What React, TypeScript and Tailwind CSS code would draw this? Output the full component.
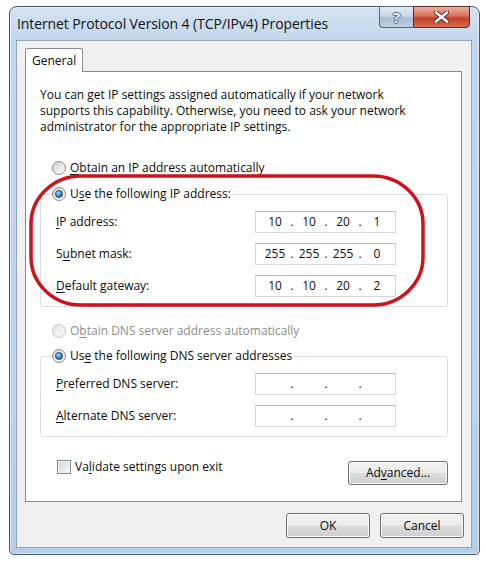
import type { ReactNode } from "react";

function Radio({ checked, disabled }: { checked?: boolean; disabled?: boolean }) {
  return (
    <span
      className={`flex h-[14px] w-[14px] shrink-0 items-center justify-center rounded-full border ${
        disabled
          ? "border-[#c2c4c6] bg-[linear-gradient(135deg,#e4e4e4,#fbfbfb)]"
          : "border-[#8a8c8e] bg-[linear-gradient(135deg,#d2d3d5,#fcfcfc)]"
      }`}
    >
      {checked && (
        <span className="h-[8px] w-[8px] rounded-full border border-[#1d4f80] bg-[radial-gradient(circle_at_35%_30%,#b7e3ff,#3a8ccc_50%,#0f4c86)]" />
      )}
    </span>
  );
}

function Key({ children }: { children: ReactNode }) {
  return <span className="underline decoration-1 underline-offset-[2px]">{children}</span>;
}

function IpBox({ parts }: { parts?: string[] }) {
  const p = parts ?? ["", "", "", ""];
  return (
    <div className="flex h-[22px] w-[141px] items-center border border-[#d3d6da] border-t-[#b9bcc1] bg-white pl-[6px] text-[#111]">
      <span className="w-[26px] text-center">{p[0]}</span>
      <span className="w-[8px] text-center">.</span>
      <span className="w-[26px] text-center">{p[1]}</span>
      <span className="w-[8px] text-center">.</span>
      <span className="w-[26px] text-center">{p[2]}</span>
      <span className="w-[8px] text-center">.</span>
      <span className="w-[26px] text-center">{p[3]}</span>
    </div>
  );
}

function Row({ label, parts }: { label: ReactNode; parts?: string[] }) {
  return (
    <div className="flex h-[22px] items-center pl-[15px]">
      <div className="w-[199px] leading-[16px]">{label}</div>
      <IpBox parts={parts} />
    </div>
  );
}

const btn =
  "flex items-center justify-center rounded-[3px] border border-[#707070] bg-[linear-gradient(180deg,#f2f2f2_0%,#ebebeb_48%,#dddddd_52%,#cfcfcf_100%)] shadow-[inset_0_0_0_1px_#fbfbfb] text-[#0a0a0a]";

export default function App() {
  return (
    <div className="relative h-[562px] w-[486px] overflow-hidden bg-white pl-[9px] pt-[6px] font-['Open_Sans',sans-serif] text-[12px] text-[#0d0d0d]">
      <div className="flex h-[549px] w-[471px] flex-col rounded-t-[8px] rounded-b-[5px] border border-[#44556b] bg-[linear-gradient(180deg,#d4e3f2_0%,#c3d8ee_6%,#bcd4ed_60%,#b6cfea_100%)] shadow-[inset_0_0_0_1px_rgba(255,255,255,0.55)]">
        {/* title bar */}
        <div className="flex h-[33px] shrink-0 items-start">
          <div className="ml-[7px] mt-[7px] whitespace-nowrap text-[14px] leading-[20px] tracking-[-0.1px] text-[#111]">
            Internet Protocol Version 4 (TCP/IPv4) Properties
          </div>
          <div className="-mt-px ml-auto mr-[9px] flex">
            <div className="flex h-[22px] w-[34px] items-center justify-center rounded-bl-[4px] border border-r-0 border-[#5a6a7e] bg-[linear-gradient(180deg,#e3ebf4_0%,#c9d7e6_45%,#aabdd2_55%,#bcd0e4_100%)]">
              <span className="text-[15px] font-bold leading-none text-[#eef3f8] [text-shadow:1px_0_#55667b,-1px_0_#55667b,0_1px_#55667b,0_-1px_#55667b]">
                ?
              </span>
            </div>
            <div className="flex h-[22px] w-[57px] items-center justify-center rounded-br-[4px] border border-[#5e2a22] bg-[linear-gradient(180deg,#eab0a2_0%,#d9705b_45%,#c2412b_55%,#d86a4c_100%)]">
              <svg width="15" height="12" viewBox="0 0 15 12">
                <path d="M2 1.5 L13 10.5 M13 1.5 L2 10.5" stroke="#5a2219" strokeWidth="4.5" strokeLinecap="round" />
                <path d="M2 1.5 L13 10.5 M13 1.5 L2 10.5" stroke="#ffffff" strokeWidth="2.6" strokeLinecap="round" />
              </svg>
            </div>
          </div>
        </div>

        {/* client area */}
        <div className="mb-[6px] ml-[6px] mr-[7px] flex flex-1 flex-col border border-[#8fa3b9] bg-[#f0f0f0]">
          <div className="pl-[8px] pt-[7px]">
            <div className="relative z-10 -mb-px flex h-[24px] w-[58px] items-center rounded-t-[2px] border border-b-0 border-[#898c95] bg-white pl-[6px]">
              General
            </div>
            <div className="flex h-[431px] w-[437px] flex-col border border-[#898c95] bg-white pl-[14px] pr-[13px] pt-[15px]">
              <p className="whitespace-nowrap leading-[16px]">
                You can get IP settings assigned automatically if your network
                <br />
                supports this capability. Otherwise, you need to ask your network
                <br />
                administrator for the appropriate IP settings.
              </p>

              <div className="mt-[25px] flex h-[16px] items-center gap-[4px] pl-[12px]">
                <Radio />
                <span>
                  <Key>O</Key>btain an IP address automatically
                </span>
              </div>

              <fieldset className="mt-[10px] rounded-[3px] border border-[#d5dfe5] pb-[9px]">
                <legend className="ml-[11px] flex h-[16px] items-center gap-[4px] pr-[2px]">
                  <Radio checked />
                  <span>
                    U<Key>s</Key>e the following IP address:
                  </span>
                </legend>
                <div className="mt-[9px] flex flex-col gap-[10px]">
                  <Row label={<><Key>I</Key>P address:</>} parts={["10", "10", "20", "1"]} />
                  <Row label={<>S<Key>u</Key>bnet mask:</>} parts={["255", "255", "255", "0"]} />
                  <Row label={<><Key>D</Key>efault gateway:</>} parts={["10", "10", "20", "2"]} />
                </div>
              </fieldset>

              <div className="mt-[16px] flex h-[16px] items-center gap-[4px] pl-[12px] text-[#8d8d8d]">
                <Radio disabled />
                <span>
                  O<Key>b</Key>tain DNS server address automatically
                </span>
              </div>

              <fieldset className="mt-[9px] rounded-[3px] border border-[#d5dfe5] pb-[9px]">
                <legend className="ml-[11px] flex h-[16px] items-center gap-[4px] pr-[2px]">
                  <Radio checked />
                  <span>
                    Us<Key>e</Key> the following DNS server addresses
                  </span>
                </legend>
                <div className="mt-[9px] flex flex-col gap-[10px]">
                  <Row label={<><Key>P</Key>referred DNS server:</>} />
                  <Row label={<><Key>A</Key>lternate DNS server:</>} />
                </div>
              </fieldset>

              <div className="mt-[22px] flex items-start">
                <div className="flex h-[16px] items-center gap-[4px] pl-[17px]">
                  <span className="h-[14px] w-[14px] border border-[#8a8c8e] bg-[linear-gradient(135deg,#d4d5d7,#f9f9f9)] shadow-[inset_0_0_0_1px_#f2f2f2]" />
                  <span>
                    Va<Key>l</Key>idate settings upon exit
                  </span>
                </div>
                <div className={`${btn} ml-auto mt-[2px] h-[24px] w-[100px]`}>
                  <span>
                    Ad<Key>v</Key>anced...
                  </span>
                </div>
              </div>
            </div>
          </div>

          <div className="mt-[11px] flex justify-end gap-[10px] pr-[7px]">
            <div className={`${btn} h-[25px] w-[84px] border-[#3c7fb1] shadow-[inset_0_0_0_1px_#a6dcf6]`}>OK</div>
            <div className={`${btn} h-[25px] w-[84px]`}>Cancel</div>
          </div>
        </div>
      </div>

      {/* red annotation around the static IP settings */}
      <svg className="absolute left-[29px] top-[174px]" width="396" height="133" viewBox="0 0 396 133">
        <rect x="2" y="2" width="392" height="129" rx="50" ry="48" fill="none" stroke="#cf1219" strokeWidth="3.5" />
      </svg>
    </div>
  );
}
